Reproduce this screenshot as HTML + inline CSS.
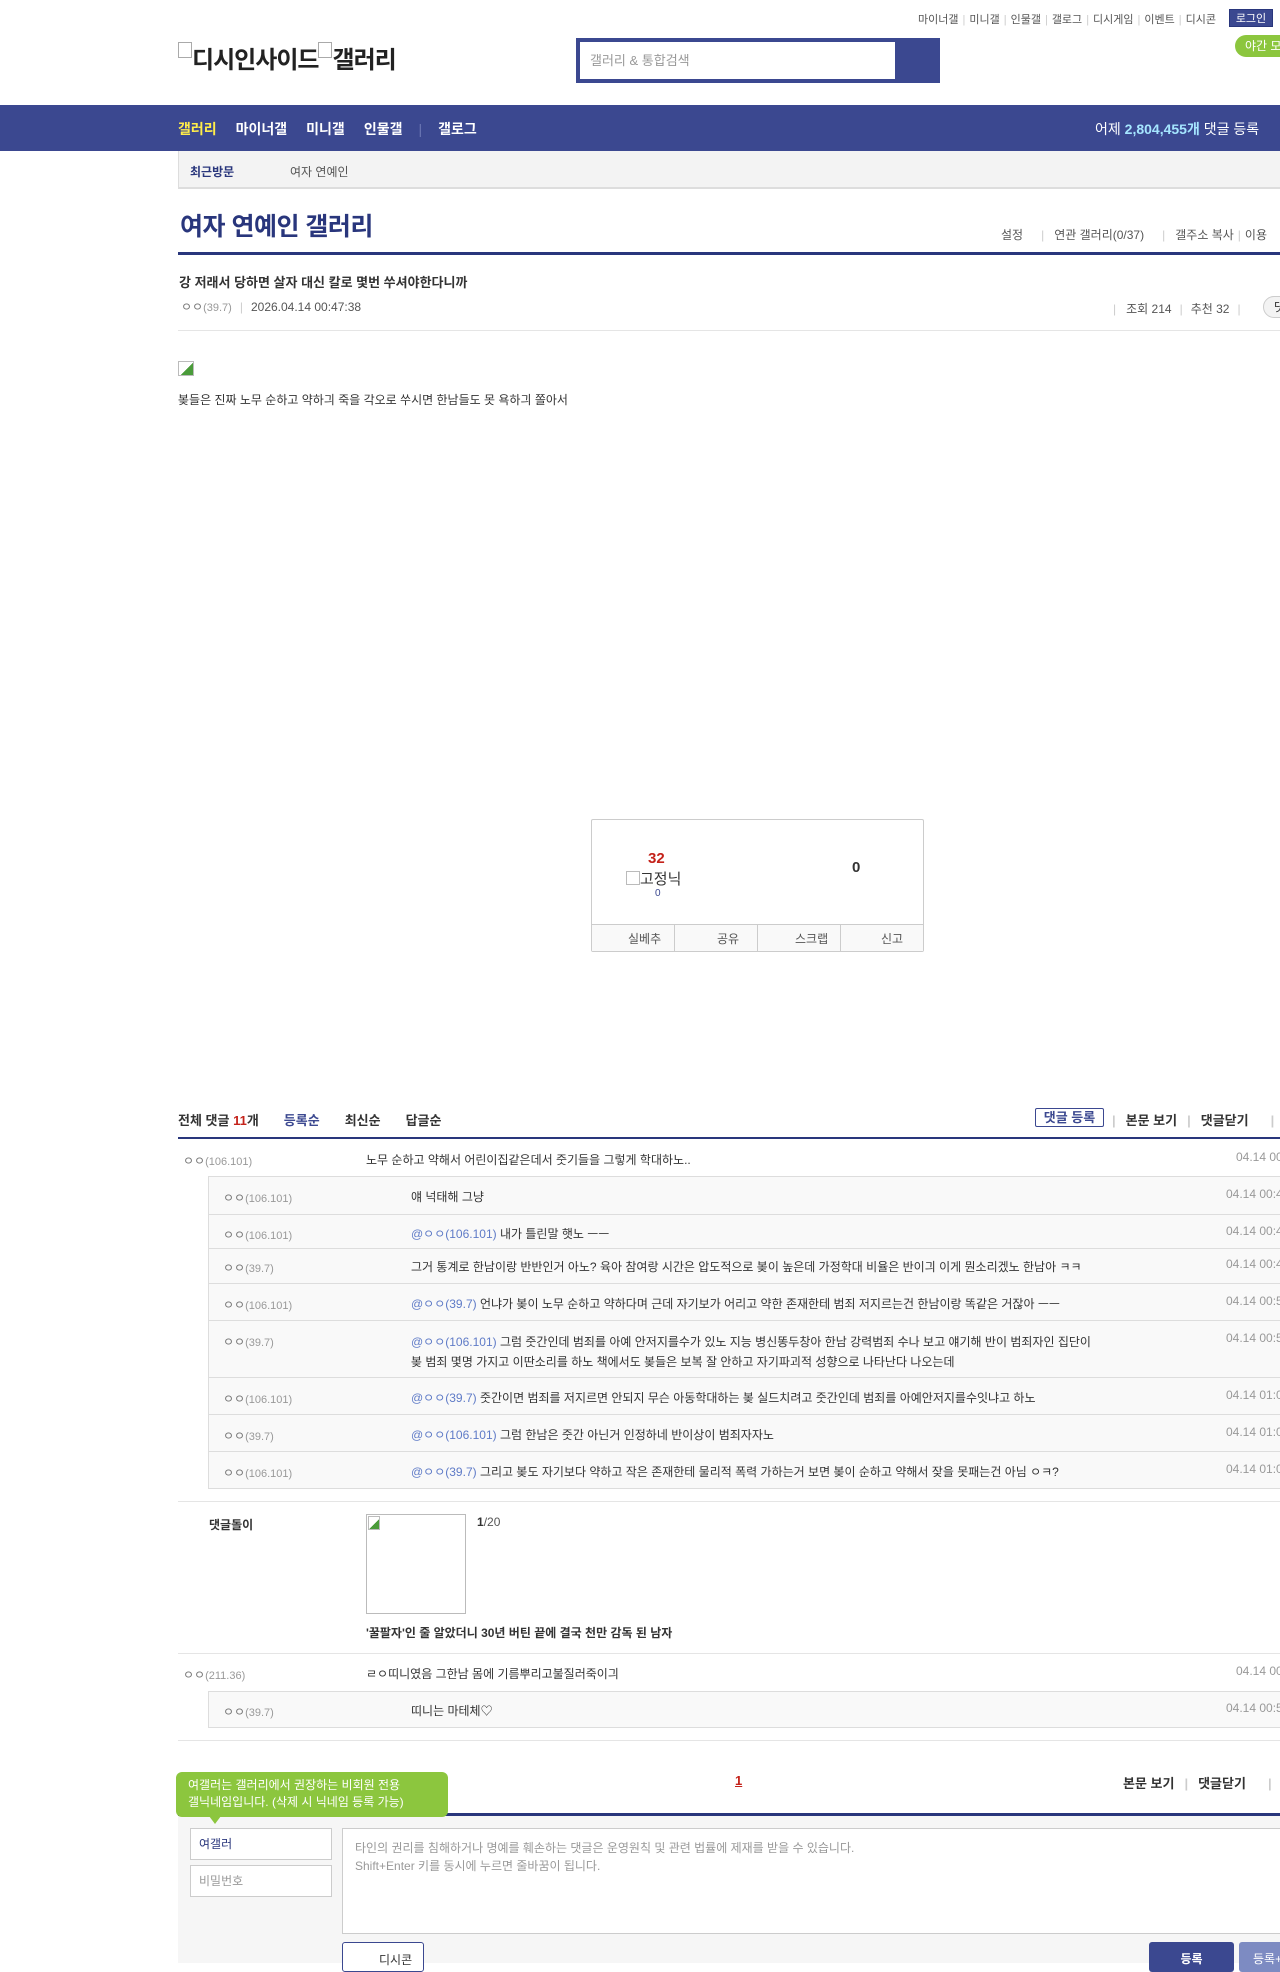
<!DOCTYPE html>
<html><head><meta charset="utf-8"><style>
*{margin:0;padding:0;box-sizing:border-box}
body{width:1280px;height:1956px;overflow:hidden;position:relative;background:#fff;font-family:"Liberation Sans","Noto Sans CJK KR",sans-serif;color:#333;font-size:12px}
.a{position:absolute;white-space:nowrap}
.sep{color:#ccc;margin:0 4px}
.nick{color:#777;font-size:12px}
.nick small{color:#999;font-size:11px}
.date{color:#999;font-size:12px}
.blue{color:#5f7bc7}
.g1{position:absolute;left:0;top:4px;width:1280px;height:900px}
.g2{position:absolute;left:0;top:4px;width:1280px;height:1956px}
.g3{position:absolute;left:0;top:7px;width:1280px;height:1956px}
</style></head><body>

<div class="a" style="left:918px;top:11px;font-size:11px;color:#555">마이너갤<span class="sep">|</span>미니갤<span class="sep">|</span>인물갤<span class="sep">|</span>갤로그<span class="sep">|</span>디시게임<span class="sep">|</span>이벤트<span class="sep">|</span>디시콘</div>
<div class="a" style="left:1229px;top:9px;width:44px;height:18px;background:#3b4890;color:#fff;font-size:11px;text-align:center;line-height:18px;border:1px solid #29367c">로그인</div>
<div class="a" style="left:1235px;top:35px;width:60px;height:22px;background:#8cc63e;border-radius:11px;color:#fff;font-size:12px;line-height:22px;padding-left:10px">야간 모드</div>

<div class="a" style="left:178px;top:40px;font-size:24px;font-weight:bold;color:#222;letter-spacing:-1px"><span style="display:inline-block;width:14px;height:16px;border:1px solid #aaa;vertical-align:top;margin-top:2px"></span>디시인사이드<span style="display:inline-block;width:14px;height:16px;border:1px solid #aaa;vertical-align:top;margin-top:2px"></span>갤러리</div>

<div class="a" style="left:576px;top:38px;width:364px;height:45px;background:#3b4890"></div>
<div class="a" style="left:580px;top:42px;width:315px;height:37px;background:#fff;color:#999;font-size:13px;line-height:37px;padding-left:10px">갤러리 &amp; 통합검색</div>

<div class="a" style="left:0;top:105px;width:1280px;height:46px;background:#3b4890"></div>
<div class="a" style="left:178px;top:106px;height:46px;line-height:46px;font-size:14px;font-weight:bold;color:#fff">
<span style="color:#ffed4a">갤러리</span><span style="margin-left:19px">마이너갤</span><span style="margin-left:19px">미니갤</span><span style="margin-left:19px">인물갤</span><span style="color:#6c78b4;margin:0 16px;font-weight:normal">|</span>갤로그</div>
<div class="a" style="left:1095px;top:106px;height:46px;line-height:46px;font-size:14px;color:#fff">어제 <b style="color:#a5e6ff">2,804,455개</b> 댓글 등록</div>

<div class="a" style="left:178px;top:151px;width:1102px;height:38px;background:#f3f3f3;border-left:1px solid #ddd;border-bottom:2px solid #ddd"></div>
<div class="a" style="left:190px;top:163px;font-size:12px;font-weight:bold;color:#29367c">최근방문</div>
<div class="a" style="left:290px;top:163px;font-size:12px;color:#555">여자 연예인</div>

<div class="a" style="left:180px;top:207px;font-size:25px;font-weight:bold;color:#29367c;letter-spacing:-0.5px">여자 연예인 갤러리</div>
<div class="a" style="left:1001px;top:226px;font-size:12px;color:#555">설정<span class="sep" style="margin:0 10px 0 18px">|</span>연관 갤러리(0/37)<span class="sep" style="margin:0 10px 0 18px">|</span>갤주소 복사<span class="sep">|</span>이용</div>
<div class="a" style="left:178px;top:252px;width:1102px;height:3px;background:#29367c"></div>

<div class="a" style="left:179px;top:272px;font-size:13px;font-weight:bold;color:#333">강 저래서 당하면 살자 대신 칼로 몇번 쑤셔야한다니까</div>
<div class="a" style="left:181px;top:298px;font-size:12px;color:#555"><span class="nick">ㅇㅇ<small>(39.7)</small></span><span class="sep" style="margin:0 8px">|</span>2026.04.14 00:47:38</div>
<div class="a" style="left:1113px;top:300px;font-size:12px;color:#555"><span class="sep" style="margin:0 10px 0 0">|</span>조회 214<span class="sep" style="margin:0 8px">|</span>추천 32<span class="sep" style="margin:0 8px">|</span></div>
<div class="a" style="left:1263px;top:296px;width:40px;height:22px;border:1px solid #ccc;border-radius:11px;background:#f3f3f3;font-size:12px;line-height:20px;padding-left:10px">댓글</div>
<div class="a" style="left:178px;top:330px;width:1102px;height:1px;background:#e5e5e5"></div>

<div class="a" style="left:178px;top:361px;width:16px;height:15px;border:1px solid #bbb;background:linear-gradient(135deg,#fff 55%,#4a9b3a 55%)"></div>
<div class="a" style="left:178px;top:391px;font-size:12px;color:#333">봊들은 진짜 노무 순하고 약하긔 죽을 각오로 쑤시면 한남들도 못 욕하긔 쫄아서</div>

<div class="g1">
<div class="a" style="left:591px;top:815px;width:333px;height:133px;border:1px solid #ccc;border-radius:2px;background:#fff"></div>
<div class="a" style="left:592px;top:920px;width:331px;height:27px;background:#f9f9f9;border-top:1px solid #ccc"></div>
<div class="a" style="left:648px;top:846px;font-size:15px;font-weight:bold;color:#c4221a">32</div>
<div class="a" style="left:626px;top:864px;font-size:15px;color:#333"><span style="display:inline-block;width:14px;height:14px;border:1px solid #bbb;vertical-align:-1px"></span>고정닉</div>
<div class="a" style="left:655px;top:884px;font-size:10px;color:#3b4890">0</div>
<div class="a" style="left:852px;top:855px;font-size:15px;font-weight:bold;color:#333">0</div>
<div class="a" style="left:674px;top:920px;width:1px;height:27px;background:#ccc"></div>
<div class="a" style="left:757px;top:920px;width:1px;height:27px;background:#ccc"></div>
<div class="a" style="left:840px;top:920px;width:1px;height:27px;background:#ccc"></div>
<div class="a" style="left:628px;top:926px;font-size:12px;color:#555">실베추</div>
<div class="a" style="left:717px;top:926px;font-size:12px;color:#555">공유</div>
<div class="a" style="left:795px;top:926px;font-size:12px;color:#555">스크랩</div>
<div class="a" style="left:881px;top:926px;font-size:12px;color:#555">신고</div>
</div>

<div class="g2">
<div class="a" style="left:178px;top:1106px;font-size:13px;font-weight:bold;color:#333">전체 댓글 <span style="color:#c4221a">11</span>개<span style="color:#3b4890;margin-left:25px">등록순</span><span style="margin-left:25px">최신순</span><span style="margin-left:25px">답글순</span></div>
<div class="a" style="left:1035px;top:1104px;width:69px;height:19px;border:1px solid #3b4890;border-radius:2px;font-size:13px;font-weight:bold;color:#3b4890;text-align:center;line-height:17px">댓글 등록</div>
<div class="a" style="left:1112px;top:1106px;font-size:13px;font-weight:bold;color:#333"><span class="sep" style="margin:0 10px 0 0">|</span>본문 보기<span class="sep" style="margin:0 10px">|</span>댓글닫기<span class="sep" style="margin:0 0 0 22px">|</span></div>
<div class="a" style="left:178px;top:1133px;width:1102px;height:2px;background:#29367c"></div>

<div class="a nick" style="left:183px;top:1148px">ㅇㅇ<small>(106.101)</small></div>
<div class="a" style="left:366px;top:1147px">노무 순하고 약해서 어린이집같은데서 줏기들을 그렇게 학대하노..</div>
<div class="a date" style="left:1236px;top:1146px">04.14 00:49:01</div>

<div class="a" style="left:208px;top:1172px;width:1080px;height:313px;background:#f9f9f9;border:1px solid #ddd"></div>
<div class="a" style="left:209px;top:1210px;width:1071px;height:1px;background:#ddd"></div>
<div class="a" style="left:209px;top:1244px;width:1071px;height:1px;background:#ddd"></div>
<div class="a" style="left:209px;top:1279px;width:1071px;height:1px;background:#ddd"></div>
<div class="a" style="left:209px;top:1316px;width:1071px;height:1px;background:#ddd"></div>
<div class="a" style="left:209px;top:1373px;width:1071px;height:1px;background:#ddd"></div>
<div class="a" style="left:209px;top:1410px;width:1071px;height:1px;background:#ddd"></div>
<div class="a" style="left:209px;top:1447px;width:1071px;height:1px;background:#ddd"></div>

<div class="a nick" style="left:223px;top:1185px">ㅇㅇ<small>(106.101)</small></div>
<div class="a" style="left:411px;top:1184px">얘 넉태해 그냥</div>
<div class="a date" style="left:1226px;top:1183px">04.14 00:49:55</div>

<div class="a nick" style="left:223px;top:1222px">ㅇㅇ<small>(106.101)</small></div>
<div class="a" style="left:411px;top:1221px"><span class="blue">@ㅇㅇ(106.101)</span> 내가 틀린말 햇노 ㅡㅡ</div>
<div class="a date" style="left:1226px;top:1220px">04.14 00:49:58</div>

<div class="a nick" style="left:223px;top:1255px">ㅇㅇ<small>(39.7)</small></div>
<div class="a" style="left:411px;top:1254px">그거 통계로 한남이랑 반반인거 아노? 육아 참여랑 시간은 압도적으로 봊이 높은데 가정학대 비율은 반이긔 이게 뭔소리겠노 한남아 ㅋㅋ</div>
<div class="a date" style="left:1226px;top:1253px">04.14 00:49:58</div>

<div class="a nick" style="left:223px;top:1292px">ㅇㅇ<small>(106.101)</small></div>
<div class="a" style="left:411px;top:1291px"><span class="blue">@ㅇㅇ(39.7)</span> 언냐가 봊이 노무 순하고 약하다며 근데 자기보가 어리고 약한 존재한테 범죄 저지르는건 한남이랑 똑같은 거잖아 ㅡㅡ</div>
<div class="a date" style="left:1226px;top:1290px">04.14 00:50:54</div>

<div class="a nick" style="left:223px;top:1329px">ㅇㅇ<small>(39.7)</small></div>
<div class="a" style="left:411px;top:1328px;line-height:20px"><span class="blue">@ㅇㅇ(106.101)</span> 그럼 줏간인데 범죄를 아예 안저지를수가 있노 지능 병신똥두창아 한남 강력범죄 수나 보고 얘기해 반이 범죄자인 집단이<br>봊 범죄 몇명 가지고 이딴소리를 하노 책에서도 봊들은 보복 잘 안하고 자기파괴적 성향으로 나타난다 나오는데</div>
<div class="a date" style="left:1226px;top:1327px">04.14 00:52:37</div>

<div class="a nick" style="left:223px;top:1386px">ㅇㅇ<small>(106.101)</small></div>
<div class="a" style="left:411px;top:1385px"><span class="blue">@ㅇㅇ(39.7)</span> 줏간이면 범죄를 저지르면 안되지 무슨 아동학대하는 봊 실드치려고 줏간인데 범죄를 아예안저지를수잇냐고 하노</div>
<div class="a date" style="left:1226px;top:1384px">04.14 01:00:12</div>

<div class="a nick" style="left:223px;top:1423px">ㅇㅇ<small>(39.7)</small></div>
<div class="a" style="left:411px;top:1422px"><span class="blue">@ㅇㅇ(106.101)</span> 그럼 한남은 줏간 아닌거 인정하네 반이상이 범죄자자노</div>
<div class="a date" style="left:1226px;top:1421px">04.14 01:01:33</div>

<div class="a nick" style="left:223px;top:1460px">ㅇㅇ<small>(106.101)</small></div>
<div class="a" style="left:411px;top:1459px"><span class="blue">@ㅇㅇ(39.7)</span> 그리고 봊도 자기보다 약하고 작은 존재한테 물리적 폭력 가하는거 보면 봊이 순하고 약해서 잦을 못패는건 아님 ㅇㅋ?</div>
<div class="a date" style="left:1226px;top:1458px">04.14 01:02:40</div>

<div class="a" style="left:178px;top:1497px;width:1102px;height:1px;background:#e5e5e5"></div>

<div class="a" style="left:209px;top:1512px;font-size:12px;font-weight:bold;color:#333">댓글돌이</div>
<div class="a" style="left:366px;top:1510px;width:100px;height:100px;border:1px solid #bbb"></div>
<div class="a" style="left:368px;top:1512px;width:12px;height:14px;border:1px solid #bbb;background:linear-gradient(135deg,#fff 55%,#4a9b3a 55%)"></div>
<div class="a" style="left:477px;top:1511px;font-size:12px;color:#555"><b style="color:#333">1</b>/20</div>
<div class="a" style="left:366px;top:1620px;font-size:12px;font-weight:bold;color:#333">'꿀팔자'인 줄 알았더니 30년 버틴 끝에 결국 천만 감독 된 남자</div>
<div class="a" style="left:178px;top:1649px;width:1102px;height:1px;background:#e5e5e5"></div>

<div class="a nick" style="left:183px;top:1662px">ㅇㅇ<small>(211.36)</small></div>
<div class="a" style="left:366px;top:1661px">ㄹㅇ띠니였음 그한남 몸에 기름뿌리고불질러죽이긔</div>
<div class="a date" style="left:1236px;top:1660px">04.14 00:51:22</div>

<div class="a" style="left:208px;top:1687px;width:1080px;height:37px;background:#f9f9f9;border:1px solid #ddd"></div>
<div class="a nick" style="left:223px;top:1699px">ㅇㅇ<small>(39.7)</small></div>
<div class="a" style="left:411px;top:1698px">띠니는 마테체♡</div>
<div class="a date" style="left:1226px;top:1697px">04.14 00:53:10</div>
<div class="a" style="left:178px;top:1736px;width:1102px;height:1px;background:#e5e5e5"></div>
</div>

<div class="g3">
<div class="a" style="left:735px;top:1766px;font-size:13px;font-weight:bold;color:#c4221a;text-decoration:underline">1</div>
<div class="a" style="left:1123px;top:1766px;font-size:13px;font-weight:bold;color:#333">본문 보기<span class="sep" style="margin:0 10px">|</span>댓글닫기<span class="sep" style="margin:0 0 0 22px">|</span></div>

<div class="a" style="left:178px;top:1806px;width:1102px;height:3px;background:#29367c"></div>
<div class="a" style="left:178px;top:1809px;width:1102px;height:147px;background:#f6f6f6"></div>
<div class="a" style="left:176px;top:1765px;width:272px;height:45px;background:#8cc63e;border-radius:6px;color:#fff;font-size:12px;line-height:17px;padding:5px 0 0 12px">여갤러는 갤러리에서 권장하는 비회원 전용<br>갤닉네임입니다. (삭제 시 닉네임 등록 가능)</div>
<div class="a" style="left:209px;top:1809px;width:0;height:0;border-left:6px solid transparent;border-right:6px solid transparent;border-top:8px solid #8cc63e"></div>
<div class="a" style="left:190px;top:1821px;width:142px;height:32px;background:#fff;border:1px solid #ccc;font-size:12px;color:#29367c;line-height:30px;padding-left:8px">여갤러</div>
<div class="a" style="left:190px;top:1858px;width:142px;height:32px;background:#fff;border:1px solid #ccc;font-size:12px;color:#999;line-height:30px;padding-left:8px">비밀번호</div>
<div class="a" style="left:342px;top:1821px;width:960px;height:106px;background:#fff;border:1px solid #ccc;font-size:12px;color:#999;line-height:18px;padding:10px 12px">타인의 권리를 침해하거나 명예를 훼손하는 댓글은 운영원칙 및 관련 법률에 제재를 받을 수 있습니다.<br>Shift+Enter 키를 동시에 누르면 줄바꿈이 됩니다.</div>
<div class="a" style="left:342px;top:1935px;width:82px;height:30px;background:#fff;border:1px solid #3b4890;border-radius:3px;font-size:12px;color:#333;padding:8px 0 0 36px">디시콘</div>
<div class="a" style="left:1149px;top:1935px;width:85px;height:30px;background:#3b4890;border-radius:3px;font-size:12px;color:#fff;text-align:center;padding-top:8px;font-weight:bold">등록</div>
<div class="a" style="left:1239px;top:1935px;width:60px;height:30px;background:#7d8bc2;border-radius:3px;font-size:12px;color:#fff;padding:8px 0 0 14px">등록+추천</div>
</div>
</body></html>
